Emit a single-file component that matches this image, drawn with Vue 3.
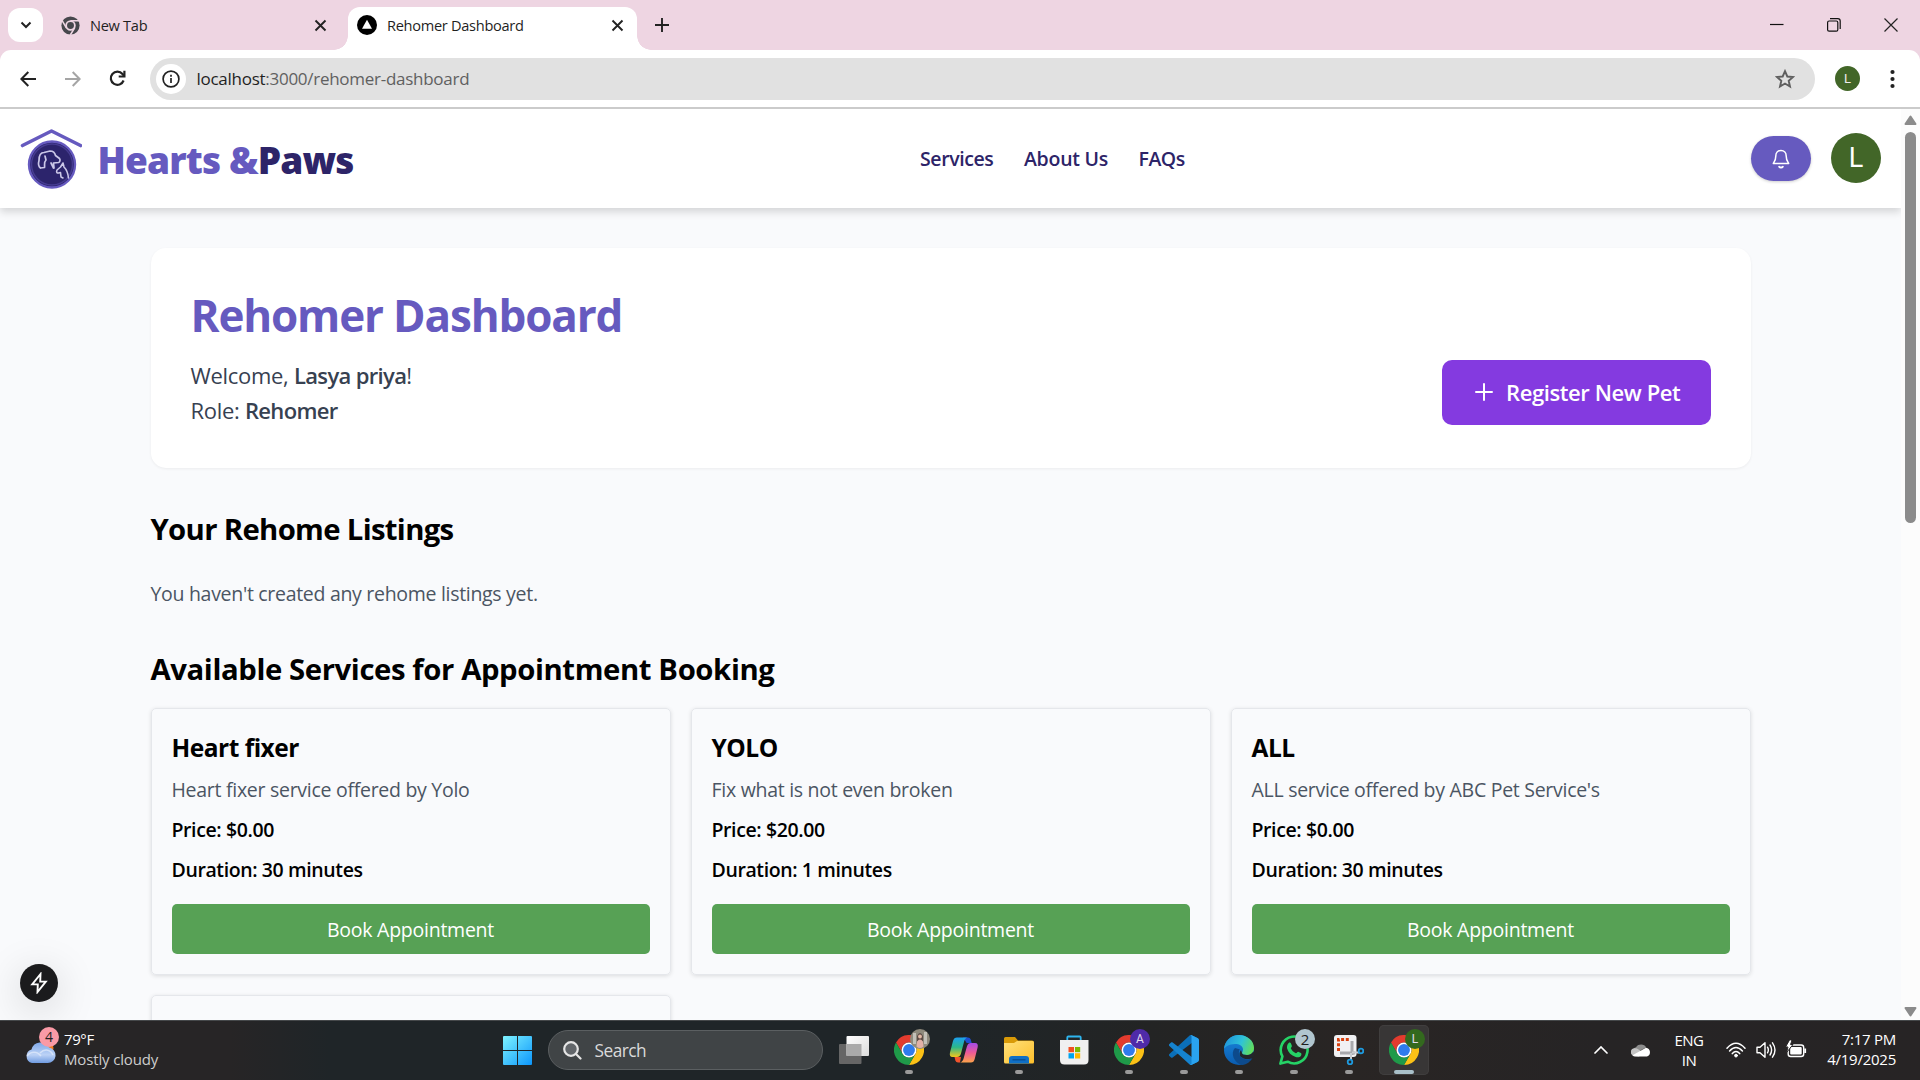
<script setup>
const services = [
  { name: 'Heart fixer', text: 'Heart fixer service offered by Yolo', price: '$0.00', minutes: 30 },
  { name: 'YOLO', text: 'Fix what is not even broken', price: '$20.00', minutes: 1 },
  { name: 'ALL', text: "ALL service offered by ABC Pet Service's", price: '$0.00', minutes: 30 },
]
const apps = [
  { id: 'view' },
  { id: 'chrome', run: true, photo: true },
  { id: 'copilot' },
  { id: 'files', run: true },
  { id: 'store' },
  { id: 'chrome', run: true, badge: 'A', tone: 'violet' },
  { id: 'code', run: true },
  { id: 'edge', run: true },
  { id: 'whatsapp', run: true, badge: '2', tone: 'pale' },
  { id: 'snip', run: true },
  { id: 'chrome', run: true, badge: 'L', tone: 'green', active: true },
]
</script>

<template>
  <div class="screen">
    <div class="tabstrip">
      <button class="tab-search">
        <svg width="12" height="12" viewBox="0 0 12 12"><path d="M1.5 3.5 6 8l4.500-4.500" fill="none" stroke="#222" stroke-width="2" /></svg>
      </button>
      <div class="tab idle">
        <svg class="fav" width="19" height="19" viewBox="0 0 48 48">
          <circle cx="24" cy="24" r="23" fill="#46474c" />
          <path d="M24 12H46M13.600 30 2.500 11M34.400 30 23.500 48" stroke="#eed5e2" stroke-width="4" />
          <circle cx="24" cy="24" r="11" fill="#46474c" stroke="#eed5e2" stroke-width="4.500" />
        </svg>
        <span class="tab-title">New Tab</span>
        <svg class="close" width="13" height="13" viewBox="0 0 13 13"><path d="M1.500 1.500l10 10M11.500 1.500l-10 10" stroke="#222" stroke-width="1.900" /></svg>
      </div>
      <div class="tab active">
        <svg class="fav" width="20" height="20" viewBox="0 0 20 20"><circle cx="10" cy="10" r="10" /><path d="M10 4.800 15 13.700H5z" fill="#fff" /></svg>
        <span class="tab-title">Rehomer Dashboard</span>
        <svg class="close" width="13" height="13" viewBox="0 0 13 13"><path d="M1.500 1.500l10 10M11.500 1.500l-10 10" stroke="#222" stroke-width="1.900" /></svg>
      </div>
      <svg class="plus" width="14" height="14" viewBox="0 0 14 14"><path d="M7 0v14M0 7h14" stroke="#222" stroke-width="1.900" /></svg>
      <div class="window-buttons">
        <svg width="14" height="14" viewBox="0 0 14 14"><path d="M0 6.500h13.500" stroke="#111" stroke-width="1.200" /></svg>
        <svg width="14" height="14" viewBox="0 0 14 14" fill="none" stroke="#111" stroke-width="1.200"><rect x=".6" y="3" width="10.200" height="10.200" rx="1.500" /><path d="M3 .6h7.800q2.400 0 2.400 2.400v8" /></svg>
        <svg width="14" height="14" viewBox="0 0 14 14"><path d="M.5.5l13 13M13.500.5l-13 13" stroke="#222" stroke-width="1.200" /></svg>
      </div>
    </div>

    <div class="toolbar-wrap">
      <div class="toolbar">
        <svg class="nav-icon" width="16" height="16" viewBox="0 0 16 16" fill="none" stroke="#222" stroke-width="2"><path d="M16 8H1.600M8.300 1 1.400 8l6.900 7" /></svg>
        <svg class="nav-icon" width="16" height="16" viewBox="0 0 16 16" fill="none" stroke="#a5a5a5" stroke-width="2"><path d="M0 8h14.400M7.700 1l6.900 7-6.900 7" /></svg>
        <svg class="nav-icon" width="17" height="17" viewBox="0 0 17 17" fill="none" stroke="#222" stroke-width="2.200"><path d="M14.600 10.500A6.600 6.600 0 1 1 13.500 4L15 5.800" /><path d="M15.400.8v5.700H9.700" /></svg>
        <div class="omnibox">
          <span class="info">
            <svg width="18" height="18" viewBox="0 0 18 18" fill="none" stroke="#222" stroke-width="1.700"><circle cx="9" cy="9" r="7.900" /><path d="M9 8v5M9 4.800v1.900" /></svg>
          </span>
          <span class="url"><b>localhost</b>:3000/rehomer-dashboard</span>
          <svg class="star" width="20" height="20" viewBox="0 0 20 20"><path d="M10 2.200l2.300 5.300 5.700.5-4.300 3.800 1.300 5.700-5-3-5 3 1.300-5.700L2 8l5.700-.5z" fill="none" stroke="#5f5f5f" stroke-width="1.900" /></svg>
        </div>
        <span class="profile">L</span>
        <svg class="dots" width="5" height="20" viewBox="0 0 5 20" fill="#222"><circle cx="2.500" cy="3" r="2.100" /><circle cx="2.500" cy="10" r="2.100" /><circle cx="2.500" cy="17" r="2.100" /></svg>
      </div>
    </div>

    <div class="viewport">
      <div class="page">
        <header class="site-header">
          <div class="brand">
            <svg width="62" height="60" viewBox="0 0 62 60" fill="none">
              <path d="M2.500 16.500 31.500 2l29 14.500" stroke="#665abf" stroke-width="3.600" stroke-linecap="round" stroke-linejoin="round" />
              <circle cx="32" cy="35.500" r="23" fill="#2c246c" stroke="#665abf" stroke-width="2.400" />
              <circle cx="32" cy="35.500" r="20.500" stroke="#463c91" stroke-width="1.500" />
              <path d="M20.500 39c-2-1.500-2.500-4-1.500-7.500 0-4 1-8 5-8l6-1.500c3.500 0 5 2 5.500 4.500l4 3c1 1.500.5 3.500-1 4l-5 .5.500 5M20.500 39l4-.5c.5-3-1-5 1.500-7.500l-1-4M31 34l2.500 5" stroke="#cbc7e8" stroke-width="1.700" stroke-linecap="round" stroke-linejoin="round" />
              <path d="M43 34l1 4c3 3 4 6 4.500 11M43 34l-2.500 4-3.500 3c-1 2.500 0 3 1.500 3l2-.5.500 4.500 2 1" stroke="#cbc7e8" stroke-width="1.600" stroke-linecap="round" stroke-linejoin="round" />
            </svg>
            <span class="brand-name">Hearts &amp;<i>Paws</i></span>
          </div>
          <nav><a class="n1">Services</a><a class="n2">About Us</a><a class="n3">FAQs</a></nav>
          <div class="account">
            <button class="bell">
              <svg width="18" height="20" viewBox="0 0 18 20" fill="none" stroke="#fff" stroke-width="1.500" stroke-linecap="round" stroke-linejoin="round"><path d="M9 1.500c-3.200 0-5.200 2.300-5.200 5.400 0 4.300-1.400 5.600-2.500 7.600h15.400c-1.100-2-2.500-3.300-2.500-7.600 0-3.100-2-5.400-5.200-5.400z" /><path d="M7.200 17.700c.8 1.100 2.800 1.100 3.600 0" stroke-width="1.900" /></svg>
            </button>
            <span class="avatar">L</span>
          </div>
        </header>

        <main>
          <section class="hero">
            <h1>Rehomer Dashboard</h1>
            <div class="hero-row">
              <div class="hero-text">
                <p>Welcome, <b>Lasya priya</b>!</p>
                <p>Role: <b>Rehomer</b></p>
              </div>
              <button class="register">
                <svg width="18" height="18" viewBox="0 0 18 18"><path d="M9 1v16M1 9h16" stroke="#fff" stroke-width="2" stroke-linecap="round" /></svg>
                <span>Register New Pet</span>
              </button>
            </div>
          </section>

          <h2 class="h-list">Your Rehome Listings</h2>
          <p class="empty">You haven't created any rehome listings yet.</p>
          <h2 class="h-avail">Available Services for Appointment Booking</h2>
          <div class="grid">
            <article v-for="s in services" :key="s.name" class="card">
              <h3>{{ s.name }}</h3>
              <p class="desc">{{ s.text }}</p>
              <p class="fact">Price: {{ s.price }}</p>
              <p class="fact">Duration: {{ s.minutes }} minutes</p>
              <button class="book">Book Appointment</button>
            </article>
            <article class="card"></article>
          </div>
        </main>
        <div class="dev-badge">
          <svg width="20" height="22" viewBox="0 0 20 22"><path d="M11.500 2 3.200 12.400h5.600L8.500 20l8.300-10.400h-5.600z" fill="none" stroke="#fff" stroke-width="1.900" /></svg>
        </div>
      </div>
      <div class="scrollbar">
        <svg width="13" height="11" viewBox="0 0 13 11"><path d="M6.500 1.500 11.500 9h-10z" fill="#8b8b8b" stroke="#8b8b8b" stroke-width="2" stroke-linejoin="round" /></svg>
        <span class="thumb"></span>
        <svg class="down" width="13" height="11" viewBox="0 0 13 11"><path d="M6.500 9.500 11.500 2h-10z" fill="#8b8b8b" stroke="#8b8b8b" stroke-width="2" stroke-linejoin="round" /></svg>
      </div>
    </div>

    <footer class="taskbar">
      <div class="weather">
        <div class="cloud">
          <svg width="36" height="32" viewBox="0 0 36 32">
            <defs><linearGradient id="cl" x1="0" y1="0" x2="0" y2="1"><stop offset="0" stop-color="#7fa8e8" /><stop offset=".6" stop-color="#bcd2f6" /><stop offset="1" stop-color="#6f9be0" /></linearGradient></defs>
            <circle cx="22" cy="16" r="7.500" fill="#f47a1c" />
            <path d="M8 31a7 7 0 0 1-.5-13.500A9.500 9.500 0 0 1 25 15.500 7.800 7.800 0 0 1 23.500 31z" fill="url(#cl)" />
            <path d="M3 24c4-5 10-5 14 0M16 21c5-5 11-3 13 2" fill="none" stroke="#e4edfb" stroke-width="1.500" opacity=".7" />
          </svg>
          <span class="alert">4</span>
        </div>
        <div class="weather-text"><span>79°F</span><span class="dim">Mostly cloudy</span></div>
      </div>

      <svg class="start" width="29" height="29" viewBox="0 0 29 29">
        <defs><linearGradient id="win" x1="0" y1="0" x2="1" y2="1"><stop offset="0" stop-color="#7ef3ff" /><stop offset="1" stop-color="#0c96fb" /></linearGradient></defs>
        <path d="M0 1q0-1 1-1h13v14H0zM15 0h13q1 0 1 1v13H15zM0 15h14v14H1q-1 0-1-1zM15 15h14v13q0 1-1 1H15z" fill="url(#win)" />
      </svg>
      <div class="search">
        <svg width="19" height="19" viewBox="0 0 19 19" fill="none" stroke="#e6e6e6" stroke-width="2.200" stroke-linecap="round"><circle cx="8" cy="8" r="6.800" fill="#62666a" /><path d="M13 13l4.500 4.500" /></svg>
        <span>Search</span>
      </div>

      <div class="apps">
        <div v-for="(a, i) in apps" :key="i" class="app" :class="{ on: a.active }">
          <svg v-if="a.id === 'view'" width="30" height="30" viewBox="0 0 30 30">
            <defs><linearGradient id="tv" x1="0" y1="0" x2="1" y2="1"><stop offset="0" stop-color="#fff" /><stop offset="1" stop-color="#dcdcdc" /></linearGradient></defs>
            <rect x="0" y="9" width="22.500" height="20" rx="1" fill="#666" /><rect x="7.500" y="1" width="22.500" height="20" rx="1" fill="url(#tv)" /><path d="M7.500 9h15v12h-15z" fill="#aaa" />
          </svg>
          <svg v-else-if="a.id === 'chrome'" width="30" height="30" viewBox="0 0 48 48">
            <path d="M3.200 12A24 24 0 0 1 44.800 12H24A12 12 0 0 0 13.600 30z" fill="#e33b2e" />
            <path d="M44.800 12A24 24 0 0 1 24 48L34.400 30A12 12 0 0 0 24 12z" fill="#fbc116" />
            <path d="M24 48A24 24 0 0 1 3.200 12L13.600 30A12 12 0 0 0 34.400 30z" fill="#1f9a49" />
            <circle cx="24" cy="24" r="12" fill="#fff" /><circle cx="24" cy="24" r="9.500" fill="#2f7bed" />
          </svg>
          <svg v-else-if="a.id === 'copilot'" width="30" height="30" viewBox="0 0 30 30">
            <defs>
              <linearGradient id="cp1" x1="0" y1="0" x2="0" y2="1"><stop offset="0" stop-color="#1ca0f0" /><stop offset=".5" stop-color="#2bb88a" /><stop offset="1" stop-color="#f2c81c" /></linearGradient>
              <linearGradient id="cp2" x1="0" y1="0" x2="0" y2="1"><stop offset="0" stop-color="#a34be8" /><stop offset=".5" stop-color="#ee5a96" /><stop offset="1" stop-color="#fba24a" /></linearGradient>
            </defs>
            <path d="M14 2.500h5q2 0 2.700 2l1 3.500h-5z" fill="#1d4fd0" />
            <path d="M11 27.500h-2q-2 0-2.600-2L5.500 22H12z" fill="#f2542d" />
            <path d="M8 2.500h10.500c-2 .5-2.800 2-3.400 4L12 18.500c-.7 2.500-2 3.500-4 3.500H3.500C1 22 .4 20 1 17.500l3-11.500c.7-2.500 2-3.500 4-3.500z" fill="url(#cp1)" />
            <path d="M22 27.500H11c2-.5 3-2 3.600-4l3.300-12c.7-2.500 2-3.500 4-3.500H26c2.600 0 3.300 2 2.600 4.500L25.700 24c-.6 2.500-1.700 3.500-3.700 3.500z" fill="url(#cp2)" />
          </svg>
          <svg v-else-if="a.id === 'files'" width="30" height="30" viewBox="0 0 30 30">
            <defs><linearGradient id="fo" x1="0" y1="0" x2="1" y2="1"><stop offset="0" stop-color="#ffe07a" /><stop offset="1" stop-color="#fdbf2b" /></linearGradient></defs>
            <path d="M0 3.500Q0 2 1.500 2H11l3 3.500h14q2 0 2 2V14H0z" fill="#d99a07" /><path d="M0 8h10l3-2h15.500Q30 6 30 7.500V27q0 1.500-1.500 1.500h-27Q0 28.500 0 27z" fill="url(#fo)" />
            <path d="M5 28.500V24q0-3 3-3h14q3 0 3 3v4.500z" fill="#0f6fc5" /><path d="M8.500 24.800h13" stroke="#084c91" stroke-width="1.300" />
          </svg>
          <svg v-else-if="a.id === 'store'" width="30" height="30" viewBox="0 0 30 30">
            <path d="M8.300 6V2.500q0-1 1-1h11.400q1 0 1 1V6" fill="none" stroke="#2eb5ee" stroke-width="1.800" />
            <path d="M1 5h28.500v20q0 4.500-4.500 4.500H5.500Q1 29.500 1 25z" fill="#f0f0f0" />
            <path d="M9.500 12h5.500v5.200H9.500z" fill="#f25022" /><path d="M16 12h5.200v5.200H16z" fill="#7fba00" /><path d="M9.500 18.200h5.500v5.300H9.500z" fill="#00a4ef" /><path d="M16 18.200h5.200v5.300H16z" fill="#ffb900" />
          </svg>
          <svg v-else-if="a.id === 'code'" width="30" height="30" viewBox="0 0 100 100">
            <path d="M96.460 10.800 75.860.88c-2.380-1.150-5.230-.67-7.100 1.200L1.300 63.600c-1.810 1.650-1.810 4.500 0 6.150l5.500 5.010c1.490 1.350 3.720 1.450 5.320.23L93.400 13.360c2.720-2.070 6.630-.13 6.630 3.290z" fill="#0b6fb8" />
            <path d="M96.460 89.200 75.860 99.120c-2.380 1.150-5.230.67-7.100-1.200L1.300 36.400c-1.810-1.650-1.810-4.500 0-6.150l5.500-5.010c1.490-1.350 3.720-1.450 5.320-.23L93.400 86.640c2.720 2.070 6.630.13 6.630-3.290z" fill="#1583cf" />
            <path d="M75.860 99.120c-2.380 1.150-5.230.67-7.100-1.200 2.310 2.300 6.240.67 6.240-2.590V4.670c0-3.260-3.930-4.890-6.240-2.590 1.870-1.870 4.720-2.350 7.100-1.200l20.600 9.900c2.170 1.040 3.540 3.230 3.540 5.630v67.170c0 2.400-1.380 4.590-3.540 5.630z" fill="#2aa3ef" />
          </svg>
          <svg v-else-if="a.id === 'edge'" width="30" height="30" viewBox="0 0 30 30">
            <defs>
              <linearGradient id="e1" x1="0" y1=".3" x2="1" y2=".6"><stop offset="0" stop-color="#1f93dc" /><stop offset=".55" stop-color="#2fc3d8" /><stop offset="1" stop-color="#63de58" /></linearGradient>
              <linearGradient id="e2" x1="0" y1="0" x2="0" y2="1"><stop offset="0" stop-color="#1a86dc" /><stop offset="1" stop-color="#0a5cb0" /></linearGradient>
            </defs>
            <circle cx="15" cy="15" r="15" fill="url(#e2)" />
            <path d="M11 13c-5 5-1 15 7 17 5-.5 8.500-3.500 10.500-7-4 2-9 2-12-1.500-2.200-2.700-2-5.500-.5-7z" fill="#0d4a8c" />
            <path d="M0 14C.5 6 7 0 15 0s15 5.500 15 13c0 4.500-3 7-7 7-3.500 0-5-1-5-2 0-.8 1-1.500 1-3.500C19 11 15.500 9 11 9 5 9 1 12 0 14z" fill="url(#e1)" />
            <path d="M18 18c0 1 1.500 2 5 2 3 0 5.300-1.400 6.400-3.800l1.600 4.300-1.600 2c-4 2.500-9.900 2-12.900-1-1.500-2-1-4.500.5-6.500z" fill="#22262a" />
          </svg>
          <svg v-else-if="a.id === 'whatsapp'" width="30" height="30" viewBox="0 0 30 30">
            <path d="M1.400 28.600l2-7.200A13.400 13.400 0 1 1 8.700 26.700z" fill="none" stroke="#25d366" stroke-width="2.600" stroke-linejoin="round" />
            <path d="M9.700 8c.6-.6 1.800-.6 2.200.3l1 2.600c.2.700-1.200 1.900-1.100 2.400 1 2.300 2.700 4 5.100 5 .7.200 1.600-1.700 2.300-1.500l2.700 1.300c.8.400.6 1.800.1 2.600-1 1.600-3.300 2-5.300 1.300-4.600-1.500-7.400-4.400-8.600-8.500-.5-2 .3-4.300 1.600-5.500z" fill="#25d366" />
          </svg>
          <svg v-else width="30" height="30" viewBox="0 0 30 30">
            <rect width="22.500" height="22" rx="3" fill="#f1f1f3" /><path d="M4.500 16V4.500H16" fill="none" stroke="#d8400f" stroke-width="3" stroke-dasharray="3 1.700" />
            <path d="M18 6v14M6 18h15" stroke="#a9a9ad" stroke-width="3" /><path d="M17 25V18M18 17.500h7" stroke="#c9cbd0" stroke-width="2" />
            <circle cx="16" cy="27" r="2.300" fill="none" stroke="#1e9be0" stroke-width="1.800" /><circle cx="27" cy="16" r="2.300" fill="none" stroke="#1e9be0" stroke-width="1.800" />
          </svg>
          <span v-if="a.photo" class="badge photo"><svg width="20" height="20" viewBox="0 0 20 20"><circle cx="10" cy="10" r="10" fill="#8f8a7c" /><path d="M3 4h3v11H3zM14 3h3v12h-3z" fill="#c2c0b8" /><path d="M7 7q3-6 6 0v5H7z" fill="#5d4c46" /><circle cx="10" cy="7.500" r="1.900" fill="#e2b9a5" /><path d="M6.500 17.500q0-7 3.500-7t3.500 7q-3.500 3-7 0z" fill="#e3b1a6" /></svg></span>
          <span v-if="a.badge" class="badge" :class="a.tone">{{ a.badge }}</span>
          <i v-if="a.run" class="run"></i>
        </div>
      </div>

      <div class="tray">
        <svg class="t-up" width="14" height="8" viewBox="0 0 14 8"><path d="M1 7l6-6 6 6" fill="none" stroke="#fff" stroke-width="1.700" stroke-linecap="round" /></svg>
        <svg class="t-cloud" width="20" height="14" viewBox="0 0 20 14"><path d="M2 6.500Q3 4.500 5 4.200A6 6 0 0 1 15.300 4.500L6 9z" fill="#8d8d8d" /><path d="M3.500 13A3.800 3.800 0 0 1 4 5.200q2 0 3.500 1.300l5 3L8 13.500z" fill="#c4c4c4" /><path d="M1.500 12.200 15 4.800a4.500 4.500 0 0 1 1 8.700H4q-1.500 0-2.500-1.300z" fill="#fff" /></svg>
        <div class="lang"><span>ENG</span><span>IN</span></div>
        <svg class="t-wifi" width="20" height="16" viewBox="0 0 20 16" fill="none" stroke="#fff" stroke-width="1.500" stroke-linecap="round"><path d="M1 6.200Q10-3.600 19 6.200M3.600 9Q10 2 16.400 9M6.300 11.600Q10 7.600 13.700 11.600" /><circle cx="10" cy="13.600" r="1.400" fill="#fff" stroke-width="1" /></svg>
        <svg class="t-sound" width="20" height="18" viewBox="0 0 20 18" fill="none" stroke="#fff" stroke-width="1.400" stroke-linecap="round" stroke-linejoin="round"><path d="M1 6.200h3L9 1.800v14.400l-5-4.400H1z" /><path d="M11.500 6.200q1.700 2.800 0 5.600M14 4q3.200 5 0 10M16.500 1.800q5 7.200 0 14.400" /></svg>
        <svg class="t-batt" width="21" height="18" viewBox="0 0 21 18"><rect x="2.200" y="5" width="15.500" height="11.500" rx="2.500" fill="none" stroke="#fff" stroke-width="1.400" /><rect x="4.200" y="7" width="11.500" height="7.500" rx="1" fill="#fff" /><path d="M19.200 8.500v4.500" stroke="#fff" stroke-width="1.800" /><path d="M3.800-.5-.5 7H2L.6 12.500 7 4.500H4.500L6 .5z" fill="#fff" stroke="#262425" stroke-width="1" /></svg>
        <div class="clock"><span>7:17 PM</span><span>4/19/2025</span></div>
      </div>
    </footer>
  </div>
</template>

<style>
html, body { margin: 0; overflow: hidden; background: #f9fafc; }
</style>

<style scoped>
.screen { width: 1920px; height: 1080px; display: flex; flex-direction: column; overflow: hidden; font-family: "Open Sans", "Noto Sans", sans-serif; }
.screen * { box-sizing: border-box; }
button { border: 0; padding: 0; font: inherit; letter-spacing: inherit; }
h1, h2, h3, p { margin: 0; }
svg { display: block; flex: none; }

.tabstrip { height: 50px; flex: none; background: #eed5e2; display: flex; align-items: center; padding-left: 8px; }
.tab-search { width: 35px; height: 34px; border-radius: 12px; background: #fff; display: flex; align-items: center; justify-content: center; }
.tab { display: flex; align-items: center; font-size: 14.600px; color: #1f1f1f; letter-spacing: -.3px; }
.tab.idle { width: 305px; height: 50px; padding: 0 21px 0 18px; }
.tab.active { position: relative; width: 289px; height: 43px; margin-top: 7px; padding: 0 13px 7px 9px; border-radius: 12px 12px 0 0; background: #fff; }
.tab.active::before, .tab.active::after { content: ""; position: absolute; bottom: 0; width: 14px; height: 14px; }
.tab.active::before { left: -14px; background: radial-gradient(circle at 0 0, transparent 13.500px, #fff 14px); }
.tab.active::after { right: -14px; background: radial-gradient(circle at 100% 0, transparent 13.500px, #fff 14px); }
.tab-title { flex: 1; padding-left: 10px; }
.plus { margin-left: 18px; }
.window-buttons { margin-left: auto; display: flex; gap: 43px; padding: 0 22px 1px 0; }

.toolbar-wrap { height: 59px; flex: none; background: #eed5e2; border-bottom: 2px solid #cbcbcb; }
.toolbar { height: 57px; background: #fff; border-radius: 11px 11px 0 0; display: flex; align-items: center; padding-left: 20px; }
.nav-icon { margin-right: 28.500px; }
.omnibox { width: 1665px; height: 42px; margin-left: -4.500px; border-radius: 21px; background: #e1e1e1; display: flex; align-items: center; padding: 0 20px 0 6px; }
.info { width: 30px; height: 30px; border-radius: 50%; background: #fff; display: flex; align-items: center; justify-content: center; }
.url { flex: 1; padding: 0 0 0 10.500px; font-size: 17px; color: #606060; letter-spacing: -.27px; }
.url b { font-weight: 400; color: #1f1f1f; }
.profile { width: 25px; height: 25px; margin-left: 20px; border-radius: 50%; background: #426628; color: #eee; font: 13px/25px Roboto, sans-serif; text-align: center; }
.dots { margin-left: 30px; }

.viewport { height: 911px; flex: none; display: flex; overflow: hidden; background: #f9fafc; }
.page { position: relative; width: 1901px; height: 911px; overflow: hidden; }
.scrollbar { width: 19px; background: #fcfcfc; display: flex; flex-direction: column; align-items: center; padding: 6px 0 3px; }
.thumb { width: 11px; height: 391px; margin-top: 6px; border-radius: 6px; background: #8b8b8b; }
.down { margin-top: auto; }

.site-header { position: relative; height: 99px; background: #fff; box-shadow: 0 4px 8px rgba(0, 0, 0, .15); display: grid; grid-template-columns: 920px 1fr auto; align-items: center; padding-right: 20px; }
.brand { display: flex; align-items: center; padding-left: 20px; gap: 14.500px; }
.brand-name { padding: 3px 0 0 1px; font-size: 37px; font-weight: 800; line-height: 50px; color: #665abf; letter-spacing: -.85px; white-space: nowrap; }
.brand-name i { font-style: normal; color: #2d2468; }
nav { display: flex; gap: 30.500px; font-size: 19.500px; font-weight: 600; line-height: 30px; color: #2d2468; letter-spacing: -.4px; }
.n2 { letter-spacing: -.25px; }
.n3 { letter-spacing: -.5px; }
.account { display: flex; align-items: center; gap: 20px; padding-bottom: 2px; }
.bell { width: 60px; height: 45px; margin-top: 2px; border-radius: 23px; background: #665abf; display: flex; align-items: center; justify-content: center; box-shadow: 0 1px 3px rgba(0, 0, 0, .2); }
.avatar { width: 50px; height: 50px; border-radius: 50%; background: #426628; color: #fff; font: 27px/50px Roboto, sans-serif; text-align: center; }

main { width: 1600px; margin: 40px 0 0 150.500px; }
.hero { height: 220px; padding: 40px; border-radius: 15px; background: #fff; box-shadow: 0 1px 3px rgba(0, 0, 0, .06); }
h1 { height: 50px; padding-top: 2px; margin-bottom: 20px; font-size: 44px; font-weight: 700; line-height: 50px; color: #665abf; letter-spacing: -1.150px; }
.hero-row { display: flex; justify-content: space-between; align-items: center; height: 70px; }
.hero-text { font-size: 22px; line-height: 35px; color: #374151; letter-spacing: -.3px; }
.hero-text b { font-weight: 600; letter-spacing: -.65px; }
.register { width: 269px; height: 65px; margin-bottom: 1px; padding-bottom: 1px; border-radius: 10px; background: #843ae0; color: #fff; display: flex; align-items: center; padding-left: 33.500px; font-size: 22px; font-weight: 600; letter-spacing: -.4px; }
.register span { padding-left: 13px; white-space: nowrap; }
h2 { padding-top: 1px; margin-bottom: -1px; font-size: 29.300px; font-weight: 700; line-height: 40px; color: #000; }
.h-list { margin-top: 40px; letter-spacing: -.67px; }
.h-avail { margin-top: 39px; letter-spacing: -.4px; }
.empty { margin-top: 30px; padding-top: 1px; font-size: 19.500px; line-height: 30px; color: #4b5563; letter-spacing: -.3px; }
.grid { display: grid; grid-template-columns: repeat(3, 1fr); gap: 20px; margin-top: 20px; }
.card { height: 267px; padding: 21px 20px 20px; border: 1px solid #e5e7eb; border-radius: 5px; box-shadow: 0 1px 4px rgba(0, 0, 0, .12); font-size: 19.500px; line-height: 30px; }
h3 { font-size: 24.500px; font-weight: 700; line-height: 35px; color: #000; letter-spacing: -.5px; }
.desc { margin-top: 10px; color: #4b5563; letter-spacing: -.28px; }
.fact { margin-top: 10px; font-weight: 600; letter-spacing: -.39px; color: #000; }
.book { width: 100%; height: 50px; margin-top: 19px; padding-top: 1px; border-radius: 5px; background: #57a155; color: #fff; font-size: 19.500px; text-align: center; letter-spacing: -.25px; }

.dev-badge { position: absolute; left: 20px; top: 855px; width: 38px; height: 38px; border-radius: 50%; background: #1b1b1d; display: flex; align-items: center; justify-content: center; box-shadow: 0 8px 40px rgba(0, 0, 0, .17); }

.taskbar { height: 60px; flex: none; border-top: 1px solid #45484a; background: linear-gradient(90deg, #272526 0, #272526 230px, #1f2528 330px, #1f2528 950px, #232424 1150px, #292524 1350px, #262425 1600px, #272425 100%); display: flex; align-items: center; padding-bottom: 1px; color: #fff; }
.weather { width: 503px; display: flex; align-items: center; font-size: 15px; line-height: 20px; padding-left: 24px; }
.cloud { position: relative; width: 40px; height: 32px; margin-top: -4px; }
.alert { position: absolute; left: 15px; top: -5px; width: 20px; height: 20px; border-radius: 50%; background: #fa9aa6; color: #222; font-size: 14px; line-height: 20px; text-align: center; }
.weather-text { display: flex; flex-direction: column; margin-top: -2px; letter-spacing: -.4px; }
.dim { color: #cdcdcd; letter-spacing: -.15px; }
.search { width: 275px; height: 40px; margin-left: 16px; border: 1px solid #5b5f61; border-radius: 20px; background: #404446; display: flex; align-items: center; padding-left: 14px; gap: 12.500px; font-size: 17.300px; color: #dadada; letter-spacing: -.5px; }
.apps { display: flex; gap: 5px; margin-left: 6px; }
.app { position: relative; width: 50px; height: 50px; border-radius: 5px; display: flex; align-items: center; justify-content: center; }
.app.on { background: #383636; box-shadow: inset 0 0 0 1px #403e3e; }
.badge { position: absolute; left: 26px; top: 4px; width: 20px; height: 20px; border-radius: 50%; font: 12px/20px Roboto, sans-serif; text-align: center; color: #e0dcef; }
.violet { background: #4f2ba8; }
.pale { background: #b1c6cf; color: #1d1d1d; font: 15px/20px "Open Sans", sans-serif; }
.green { background: #33691e; }
.run { position: absolute; bottom: 1px; left: 21px; width: 8px; height: 4px; border-radius: 2px; background: #9a9a9a; }
.on .run { left: 15px; width: 20px; background: #a9c0c9; }
.tray { display: flex; align-items: center; margin-left: 165px; font-size: 15px; line-height: 20.500px; flex: 1; padding-right: 24px; letter-spacing: -.25px; }
.t-cloud { margin-left: 23px; }
.lang { width: 40px; margin-left: 18px; display: flex; flex-direction: column; align-items: center; letter-spacing: -.5px; }
.t-wifi { margin-left: 17px; }
.t-sound { margin-left: 10px; }
.t-batt { margin: -2px 0 0 10px; }
.clock { margin: -2px 0 0 auto; display: flex; flex-direction: column; align-items: flex-end; }
</style>
